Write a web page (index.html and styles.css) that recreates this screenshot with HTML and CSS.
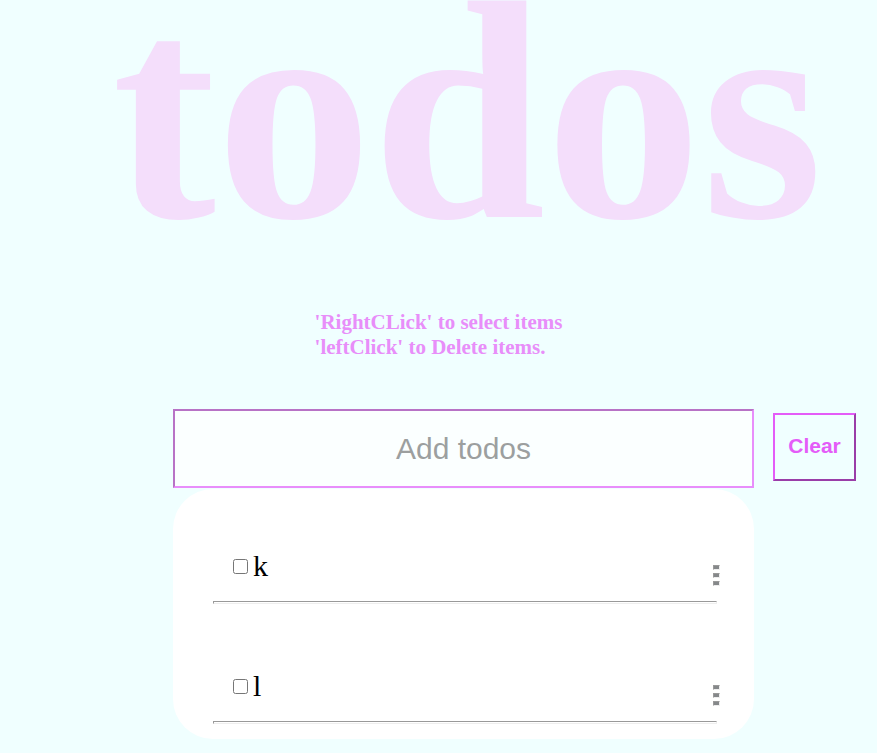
FILE: index.html
```html
<!DOCTYPE html>
<html lang="en">
<head>
<meta charset="utf-8">
<meta name="viewport" content="width=device-width, initial-scale=1">
<title>todos</title>
<link rel="stylesheet" href="styles.css">
</head>
<body>
<header class="header">
  <h1 class="title">todos</h1>
  <p class="hint">'RightCLick' to select items<br>'leftClick' to Delete items.</p>
</header>
<main class="board">
  <form class="entry">
    <input class="entry-input" type="text" placeholder="Add todos" aria-label="Add todos">
    <button class="clear" type="button">Clear</button>
  </form>
  <ul class="list">
    <li class="item">
      <div class="row">
        <label class="todo"><input class="check" type="checkbox">k</label>
        <button class="menu" type="button" aria-label="Item menu"><span class="dot"></span><span class="dot"></span><span class="dot"></span></button>
      </div>
      <hr class="rule">
    </li>
    <li class="item">
      <div class="row">
        <label class="todo"><input class="check" type="checkbox">l</label>
        <button class="menu" type="button" aria-label="Item menu"><span class="dot"></span><span class="dot"></span><span class="dot"></span></button>
      </div>
      <hr class="rule">
    </li>
  </ul>
</main>
</body>
</html>
```
FILE: styles.css
```css
* {
  box-sizing: border-box;
}

body {
  margin: 0;
  background: #f0ffff;
  font-family: "Liberation Serif", "Times New Roman", serif;
  overflow-x: hidden;
}

.header {
  display: flex;
  flex-direction: column;
  align-items: center;
}

.title {
  margin: 0 0 0 58px;
  color: #f4defb;
  font-size: 312px;
  font-weight: 700;
  line-height: 224px;
}

.hint {
  margin: 86px 0 0;
  color: #e88ef9;
  font-size: 21px;
  font-weight: 700;
  line-height: 25px;
}

.board {
  display: grid;
  grid-template-columns: 1fr 83px;
  column-gap: 19px;
  margin: 49px 21px 0 173px;
}

.entry {
  display: grid;
  grid-template-columns: subgrid;
  grid-column: 1 / -1;
  align-items: center;
}

.entry-input {
  width: 100%;
  height: 79px;
  padding: 0 20px;
  border: 2px solid;
  border-color: #b873c6 #e88efb #e88efb #b873c6;
  background: #fbffff;
  color: #000;
  font-family: "Liberation Sans", Arial, sans-serif;
  font-size: 30px;
  text-align: center;
}

.entry-input::placeholder {
  color: #9c9f9f;
}

.clear {
  height: 68px;
  margin-bottom: 3px;
  padding: 0 0 2px;
  border: 2px solid;
  border-color: #e45cf8 #9a3ea8 #9a3ea8 #e45cf8;
  background: transparent;
  color: #e45cf8;
  font-family: "Liberation Sans", Arial, sans-serif;
  font-size: 21px;
  font-weight: 700;
}

.list {
  margin: 1px 0 0;
  padding: 0 37px 15px 40px;
  border-radius: 40px;
  background: #fff;
  list-style: none;
}

.item {
  height: 120px;
  display: flex;
  flex-direction: column;
  justify-content: flex-end;
}

.item:first-child {
  height: 115px;
}

.row {
  display: flex;
  justify-content: space-between;
  align-items: center;
  height: 34px;
  margin: 0 -3px 18px 20px;
}

.todo {
  display: flex;
  align-items: center;
  gap: 5px;
  font-size: 30px;
  line-height: 34px;
}

.check {
  width: 15px;
  height: 15px;
  margin: 0;
}

.menu {
  display: grid;
  gap: 3px;
  margin-top: 18px;
  padding: 0;
  border: 0;
  background: none;
}

.dot {
  width: 7px;
  height: 5px;
  border: 1px solid;
  border-color: #999 #eee #eee #999;
  background: #85888a;
}

.rule {
  width: 100%;
  height: 3px;
  margin: 0;
  border: 1px solid;
  border-color: #999 #eee #eee #999;
}
```
